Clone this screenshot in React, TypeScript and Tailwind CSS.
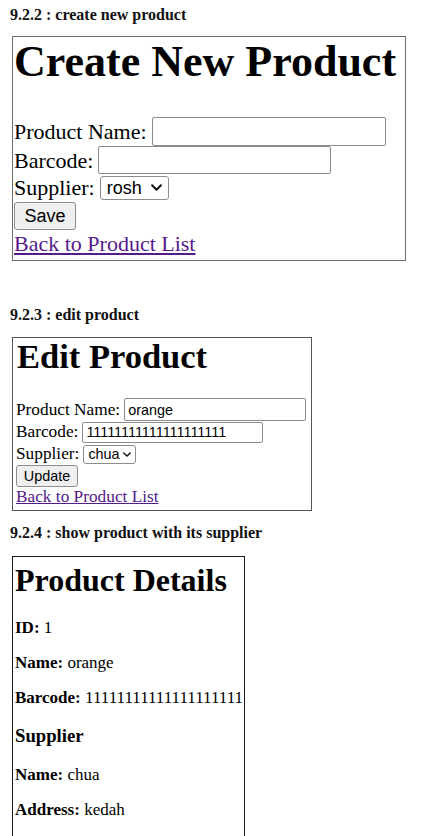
import { ReactNode } from "react"

const serif = "font-['Liberation_Serif','Times_New_Roman',serif]"
const sans = "font-['Liberation_Sans',Arial,sans-serif]"

/* ─── small form pieces, sized per screenshot scale ─── */

function Chevron({ w, h }: { w: number; h: number }) {
  return (
    <svg width={w} height={h} viewBox="0 0 10 6" fill="none" className="shrink-0">
      <polyline
        points="1,1 5,5 9,1"
        stroke="#111"
        strokeWidth="1.8"
        strokeLinecap="round"
        strokeLinejoin="round"
      />
    </svg>
  )
}

function SectionTitle({ children }: { children: ReactNode }) {
  return (
    <div className={`${serif} pl-[10px] text-[16px] font-bold leading-[18px] text-[#111]`}>
      {children}
    </div>
  )
}

/* ─── 9.2.2 : create new product (shot at ~1.375x) ─── */

function CreateProduct() {
  return (
    <div className={`${serif} ml-[12px] mt-[12px] flex h-[225px] w-[394px] flex-col border border-[#6e6e6e] text-black`}>
      <h1 className="pl-[1px] text-[44px] font-bold leading-[49px]">Create New Product</h1>

      <div className="mt-[31px] flex flex-col pl-[1px] text-[22px] leading-[25px]">
        <div className="flex h-[29px] items-center gap-[5px]">
          <span>Product Name:</span>
          <input className="h-[29px] w-[234px] rounded-[2px] border border-[#8c8c8c] bg-white" />
        </div>
        <div className="flex h-[28px] items-center gap-[5px]">
          <span>Barcode:</span>
          <input className="h-[28px] w-[233px] rounded-[2px] border border-[#8c8c8c] bg-white" />
        </div>
        <div className="flex h-[27px] items-center gap-[5px]">
          <span>Supplier:</span>
          <div className={`${sans} flex h-[24px] w-[69px] items-center justify-between rounded-[3px] border border-[#8c8c8c] bg-white pl-[6px] pr-[6px] text-[18px] leading-[20px]`}>
            <span>rosh</span>
            <Chevron w={11} h={7} />
          </div>
        </div>
        <div className="flex h-[29px] items-center">
          <button className={`${sans} h-[28px] w-[62px] rounded-[3px] border border-[#8c8c8c] bg-[#efefef] text-[18px] leading-[20px] text-black`}>
            Save
          </button>
        </div>
        <a href="#" className="mt-[1px] w-fit text-[#551a8b] underline">
          Back to Product List
        </a>
      </div>
    </div>
  )
}

/* ─── 9.2.3 : edit product (shot at ~1.08x) ─── */

function EditProduct() {
  return (
    <div className={`${serif} ml-[12px] mt-[13px] flex h-[174px] w-[300px] flex-col border border-[#555] text-black`}>
      <h1 className="pl-[4px] text-[34.5px] font-bold leading-[36px]">Edit Product</h1>

      <div className="mt-[24px] flex flex-col pl-[3px] text-[17.3px] leading-[20px]">
        <div className="flex h-[23px] items-center gap-[4px]">
          <span>Product Name:</span>
          <input
            readOnly
            value="orange"
            className={`${sans} h-[23px] w-[182px] rounded-[2px] border border-[#8c8c8c] bg-white px-[3px] text-[14.4px] text-black`}
          />
        </div>
        <div className="flex h-[22px] items-center gap-[4px]">
          <span>Barcode:</span>
          <input
            readOnly
            value="11111111111111111111"
            className={`${sans} h-[21px] w-[181px] rounded-[2px] border border-[#8c8c8c] bg-white px-[3px] text-[14.4px] text-black`}
          />
        </div>
        <div className="flex h-[22px] items-center gap-[4px]">
          <span>Supplier:</span>
          <div className={`${sans} flex h-[19px] w-[53px] items-center justify-between rounded-[3px] border border-[#8c8c8c] bg-white pl-[4px] pr-[4px] text-[14.4px] leading-[16px]`}>
            <span>chua</span>
            <Chevron w={8} h={5} />
          </div>
        </div>
        <div className="flex h-[22px] items-center">
          <button className={`${sans} h-[22px] w-[62px] rounded-[3px] border border-[#8c8c8c] bg-[#efefef] text-[14.4px] leading-[16px] text-black`}>
            Update
          </button>
        </div>
        <a href="#" className="w-fit text-[#551a8b] underline">
          Back to Product List
        </a>
      </div>
    </div>
  )
}

/* ─── 9.2.4 : show product with its supplier (shot at ~1.06x) ─── */

const details = [
  { label: "ID:", value: "1" },
  { label: "Name:", value: "orange" },
  { label: "Barcode:", value: "11111111111111111111" },
]

function ProductDetails() {
  return (
    <div className={`${serif} ml-[12px] mt-[14px] flex h-[300px] w-[233px] flex-col border border-[#1a1a1a] pl-[2px] text-black`}>
      <h1 className="mt-[5px] text-[32px] font-bold leading-[37px]">Product Details</h1>
      <div className="mt-[19px] flex flex-col gap-[16px] text-[17px] leading-[19px]">
        {details.map((d) => (
          <p key={d.label}>
            <b>{d.label}</b> {d.value}
          </p>
        ))}
      </div>
      <h3 className="mt-[18px] text-[18.72px] font-bold leading-[21px]">Supplier</h3>
      <div className="mt-[19px] flex flex-col gap-[16px] text-[17px] leading-[19px]">
        <p>
          <b>Name:</b> chua
        </p>
        <p>
          <b>Address:</b> kedah
        </p>
      </div>
    </div>
  )
}

export default function App() {
  return (
    <div className="h-[836px] w-[438px] overflow-hidden bg-white pt-[6px]">
      <SectionTitle>9.2.2 : create new product</SectionTitle>
      <CreateProduct />
      <div className="mt-[45px]">
        <SectionTitle>9.2.3 : edit product</SectionTitle>
      </div>
      <EditProduct />
      <div className="mt-[13px]">
        <SectionTitle>9.2.4 : show product with its supplier</SectionTitle>
      </div>
      <ProductDetails />
    </div>
  )
}
